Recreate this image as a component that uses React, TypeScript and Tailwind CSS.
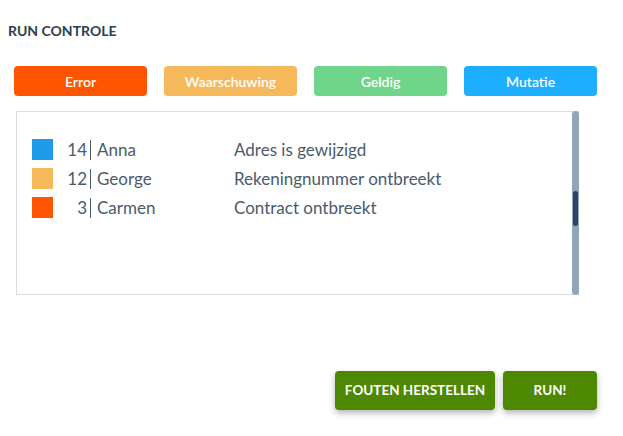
import React from 'react';

type Row = { color: string; nr: number; name: string; msg: string };

const rows: Row[] = [
  { color: 'bg-[#1e9be9]', nr: 14, name: 'Anna', msg: 'Adres is gewijzigd' },
  { color: 'bg-[#f5b95b]', nr: 12, name: 'George', msg: 'Rekeningnummer ontbreekt' },
  { color: 'bg-[#ff5500]', nr: 3, name: 'Carmen', msg: 'Contract ontbreekt' },
];

const filters = [
  { label: 'Error', cls: 'bg-[#ff5500]' },
  { label: 'Waarschuwing', cls: 'bg-[#f5b95b]' },
  { label: 'Geldig', cls: 'bg-[#6fd58b]' },
  { label: 'Mutatie', cls: 'bg-[#1eaeff]' },
];

export default function App() {
  return (
    <div className="w-[623px] h-[436px] bg-white font-['Lato','Liberation_Sans',sans-serif] text-[#4a5b6c]">
      <h1 className="pl-2 pt-[23px] text-[14px] leading-[16px] font-bold text-[#2c3e50]">RUN CONTROLE</h1>

      <div className="flex gap-[17px] pl-[14px] mt-[27px]">
        {filters.map((f) => (
          <button
            key={f.label}
            className={`${f.cls} w-[133px] h-[30px] rounded text-white text-[14px] font-semibold`}
          >
            {f.label}
          </button>
        ))}
      </div>

      <div className="relative ml-4 mt-[15px] w-[563px] h-[184px] border border-[#d5dde5] pt-[23px] pl-[15px]">
        {rows.map((r) => (
          <div key={r.name} className="flex items-center h-[29px]">
            <span className={`${r.color} w-[21px] h-[21px]`} />
            <span className="w-[34px] text-right text-[17px]">{r.nr}</span>
            <span className="ml-[3px] mr-[6px] w-px h-[20px] bg-[#4a5b6c]" />
            <span className="w-[137px] text-[17px]">{r.name}</span>
            <span className="text-[17px]">{r.msg}</span>
          </div>
        ))}
        <div className="absolute -top-px -right-px -bottom-px w-[7px] bg-[#93a5b8] rounded-sm">
          <div className="absolute left-[1px] right-[1px] top-[80px] h-[35px] bg-[#2c4563] rounded-sm" />
        </div>
      </div>

      <div className="flex justify-end gap-2 pr-[26px] mt-[76px]">
        <button className="w-[160px] h-[39px] rounded bg-[#4e8800] text-white text-[13.5px] font-bold shadow-[0_3px_6px_rgba(0,0,0,0.3)]">
          FOUTEN HERSTELLEN
        </button>
        <button className="w-[94px] h-[39px] rounded bg-[#4e8800] text-white text-[13.5px] font-bold shadow-[0_3px_6px_rgba(0,0,0,0.3)]">
          RUN!
        </button>
      </div>
    </div>
  );
}
